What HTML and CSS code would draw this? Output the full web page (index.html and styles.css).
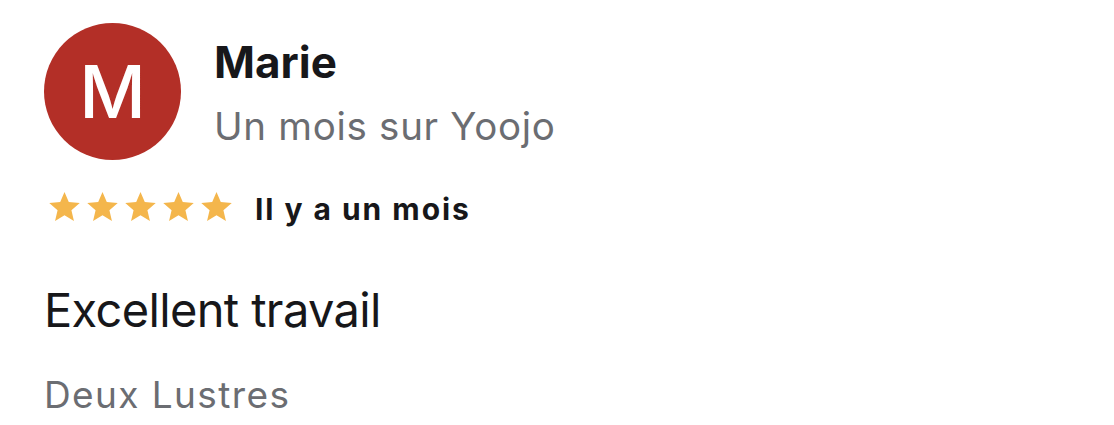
FILE: index.html
```html
<!DOCTYPE html>
<html lang="fr">
<head>
<meta charset="utf-8">
<link rel="stylesheet" href="styles.css">
</head>
<body>
<div class="review">
  <div class="header">
    <div class="avatar">M</div>
    <div class="who">
      <div class="name">Marie</div>
      <div class="since">Un mois sur Yoojo</div>
    </div>
  </div>
  <div class="rating">
    <div class="stars">
      <svg class="star" viewBox="2 2 20 19" width="31" height="29"><path d="M12 17.27L18.18 21l-1.64-7.03L22 9.24l-7.19-.61L12 2 9.19 8.63 2 9.24l5.46 4.73L5.82 21z"/></svg>
      <svg class="star" viewBox="2 2 20 19" width="31" height="29"><path d="M12 17.27L18.18 21l-1.64-7.03L22 9.24l-7.19-.61L12 2 9.19 8.63 2 9.24l5.46 4.73L5.82 21z"/></svg>
      <svg class="star" viewBox="2 2 20 19" width="31" height="29"><path d="M12 17.27L18.18 21l-1.64-7.03L22 9.24l-7.19-.61L12 2 9.19 8.63 2 9.24l5.46 4.73L5.82 21z"/></svg>
      <svg class="star" viewBox="2 2 20 19" width="31" height="29"><path d="M12 17.27L18.18 21l-1.64-7.03L22 9.24l-7.19-.61L12 2 9.19 8.63 2 9.24l5.46 4.73L5.82 21z"/></svg>
      <svg class="star" viewBox="2 2 20 19" width="31" height="29"><path d="M12 17.27L18.18 21l-1.64-7.03L22 9.24l-7.19-.61L12 2 9.19 8.63 2 9.24l5.46 4.73L5.82 21z"/></svg>
    </div>
    <div class="when">Il y a un mois</div>
  </div>
  <div class="title">Excellent travail</div>
  <div class="service">Deux Lustres</div>
</div>
</body>
</html>
```
FILE: styles.css
```css
html, body {
  margin: 0;
  padding: 0;
  background: #ffffff;
}
body {
  font-family: Inter, "Liberation Sans", sans-serif;
  color: #1b1b1d;
}
.review {
  padding: 23px 0 0 44px;
}
.header {
  display: flex;
  align-items: flex-start;
  gap: 33px;
}
.avatar {
  width: 137px;
  height: 137px;
  border-radius: 50%;
  background: #b32f27;
  color: #ffffff;
  font-size: 73px;
  font-weight: 500;
  line-height: 137px;
  text-align: center;
  flex: none;
}
.who {
  padding-top: 14px;
}
.name {
  font-size: 44px;
  font-weight: 700;
  line-height: 50px;
  color: #17171a;
}
.since {
  margin-top: 14px;
  font-size: 38.5px;
  line-height: 50px;
  letter-spacing: 0.7px;
  color: #6b6d72;
}
.rating {
  display: flex;
  align-items: flex-start;
  margin-top: 31px;
}
.stars {
  display: flex;
  gap: 7px;
  padding-left: 5px;
  padding-top: 1px;
  margin-right: 23px;
}
.star {
  display: block;
  fill: #f4b64c;
}
.when {
  font-size: 30px;
  font-weight: 700;
  line-height: 36px;
  letter-spacing: 1.95px;
  color: #17171a;
}
.title {
  margin-top: 55px;
  font-size: 47px;
  line-height: 56px;
  letter-spacing: -0.65px;
  color: #17171a;
}
.service {
  margin-top: 35px;
  font-size: 37px;
  line-height: 44px;
  letter-spacing: 1.4px;
  color: #6b6d72;
}
```
